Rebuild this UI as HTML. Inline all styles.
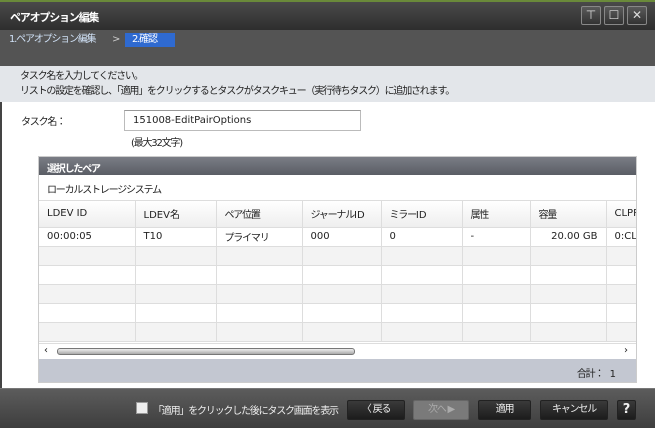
<!DOCTYPE html>
<html><head><meta charset="utf-8"><style>
*{margin:0;padding:0;box-sizing:border-box}
body{width:655px;height:428px;overflow:hidden;font-family:"DejaVu Sans","Noto Sans CJK JP",sans-serif;font-size:10px;color:#222;background:#fff;position:relative}
.abs{position:absolute}
.j{letter-spacing:-1.2px}
.title{left:0;top:0;width:655px;height:30px;background:linear-gradient(#4a4a4a,#2e2e2e);border-top:2px solid #6a8a3a}
.title span{position:absolute;left:10px;top:7px;color:#fff;font-weight:bold;font-size:11px}
.wb{top:6px;width:20px;height:19px;border:1px solid #888;background:linear-gradient(#5a5a5a,#333);color:#ddd;font-size:12px;text-align:center;line-height:17px;border-radius:2px}
.crumb{left:0;top:30px;width:655px;height:36px;background:#545454}
.crumb span{line-height:14px;top:3px}
.instr{left:0;top:66px;width:655px;height:36px;background:#e3e6ea;padding:3px 0 0 20px;line-height:15px}
td{border-right:1px solid #ddd;border-bottom:1px solid #ddd;padding-left:8px;white-space:nowrap;overflow:hidden}
table{border-collapse:collapse;table-layout:fixed}
.btn{top:400px;height:20px;border:1px solid #222;background:linear-gradient(#3a3a3a,#1c1c1c);color:#eee;text-align:center;line-height:18px;border-radius:2px}
</style></head><body>
<div class="abs" style="left:0;top:0;width:2px;height:428px;background:#444"></div>
<div class="abs title"><span class="j">ペアオプション編集</span></div>
<div class="abs wb" style="left:581px">⊤</div>
<div class="abs wb" style="left:604px">☐</div>
<div class="abs wb" style="left:627px">✕</div>
<div class="abs crumb">
<span class="abs j" style="left:9px;color:#cfe0f5">1.ペアオプション編集</span>
<span class="abs" style="left:112px;color:#ccc">&gt;</span>
<span class="abs j" style="left:125px;width:50px;height:14px;background:#2f6ad0;color:#fff;padding-left:7px">2.確認</span>
</div>
<div class="abs instr j">タスク名を入力してください。<br>リストの設定を確認し、「適用」をクリックするとタスクがタスクキュー（実行待ちタスク）に追加されます。</div>
<span class="abs j" style="left:21px;top:113px">タスク名：</span>
<div class="abs" style="left:124px;top:110px;width:237px;height:21px;border:1px solid #bbb;border-top-color:#999;padding:4px 0 0 8px">151008-EditPairOptions</div>
<span class="abs j" style="left:131px;top:134px">(最大32文字)</span>
<div class="abs" style="left:38px;top:156px;width:599px;height:227px;border:1px solid #ccc;background:#fff">
<div class="j" style="height:18px;background:linear-gradient(#7a7d85,#5a5d65);color:#fff;font-weight:bold;padding:3px 0 0 8px">選択したペア</div>
<div class="j" style="height:26px;border-bottom:1px solid #ddd;padding:6px 0 0 8px">ローカルストレージシステム</div>
<div style="overflow:hidden;width:597px;height:142px">
<table style="width:640px">
<colgroup><col style="width:96px"><col style="width:81px"><col style="width:86px"><col style="width:79px"><col style="width:81px"><col style="width:68px"><col style="width:76px"><col style="width:73px"></colgroup>
<tr style="height:26px;background:linear-gradient(#fff,#eee)"><td>LDEV ID</td><td>LDEV<span class="j">名</span></td><td class="j">ペア位置</td><td><span class="j">ジャーナル</span>ID</td><td><span class="j">ミラー</span>ID</td><td class="j">属性</td><td class="j">容量</td><td>CLPR</td></tr>
<tr style="height:19px"><td>00:00:05</td><td>T10</td><td class="j">プライマリ</td><td>000</td><td>0</td><td>-</td><td style="text-align:right;padding-right:8px">20.00 GB</td><td>0:CLPR0</td></tr>
<tr style="height:19px;background:#f3f3f3"><td></td><td></td><td></td><td></td><td></td><td></td><td></td><td></td></tr>
<tr style="height:19px"><td></td><td></td><td></td><td></td><td></td><td></td><td></td><td></td></tr>
<tr style="height:19px;background:#f3f3f3"><td></td><td></td><td></td><td></td><td></td><td></td><td></td><td></td></tr>
<tr style="height:19px"><td></td><td></td><td></td><td></td><td></td><td></td><td></td><td></td></tr>
<tr style="height:19px;background:#f3f3f3"><td></td><td></td><td></td><td></td><td></td><td></td><td></td><td></td></tr>
</table></div>
<div style="position:relative;height:16px;border-top:1px solid #ddd">
<span class="abs" style="left:5px;top:1px">‹</span>
<div class="abs" style="left:18px;top:4px;width:298px;height:7px;border:1px solid #777;border-radius:3px;background:linear-gradient(#eee,#aaa)"></div>
<span class="abs" style="left:585px;top:1px">›</span></div>
<div style="height:23px;background:#c3c7d1;text-align:right;padding:6px 20px 0 0"><span class="j">合計：</span>&nbsp; 1</div>
</div>
<div class="abs" style="left:0;top:388px;width:655px;height:40px;background:linear-gradient(#5c5c5c,#3e3e3e);border-top:1px solid #777"></div>
<div class="abs" style="left:136px;top:402px;width:12px;height:12px;background:#eee;border:1px solid #999"></div>
<span class="abs j" style="left:153px;top:402px;color:#eee">「適用」をクリックした後にタスク画面を表示</span>
<div class="abs btn j" style="left:347px;width:58px">〈 戻る</div>
<div class="abs btn j" style="left:413px;width:56px;background:#7a7a7a;border-color:#666;color:#aaa">次へ ▶</div>
<div class="abs btn j" style="left:478px;width:53px">適用</div>
<div class="abs btn j" style="left:540px;width:68px">キャンセル</div>
<div class="abs btn" style="left:617px;width:19px;font-weight:bold;font-size:13px">?</div>
</body></html>
